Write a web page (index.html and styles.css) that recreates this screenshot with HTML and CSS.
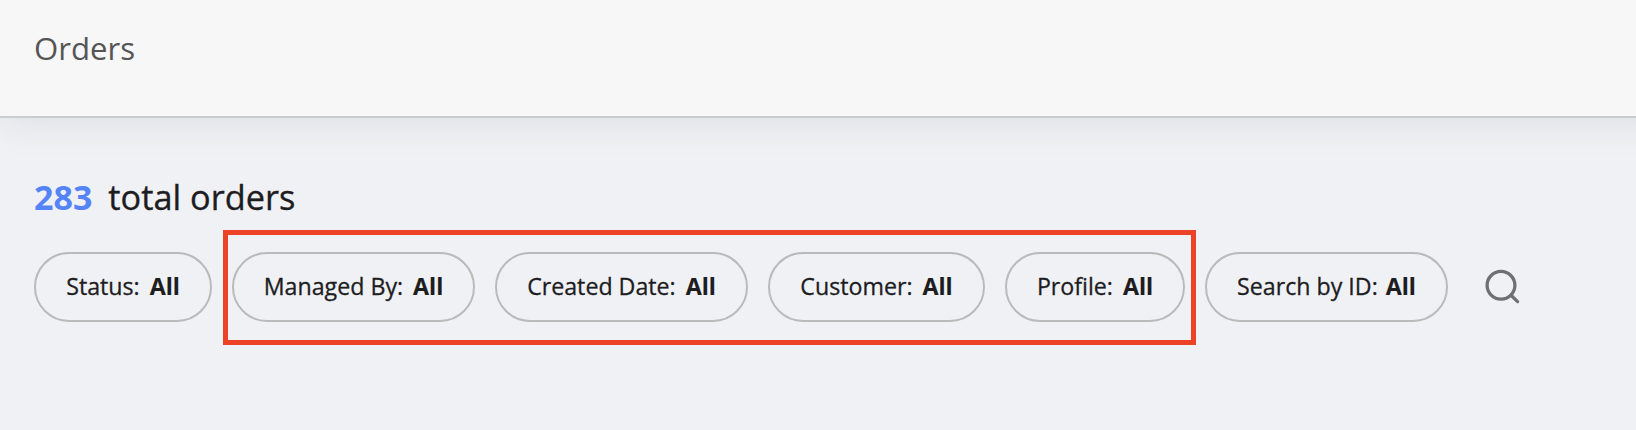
FILE: index.html
```html
<!DOCTYPE html>
<html lang="en">
<head>
<meta charset="utf-8">
<title>Orders</title>
<link rel="stylesheet" href="styles.css">
</head>
<body>
<header class="topbar"><h1 class="title">Orders</h1></header>
<main class="content">
<p class="summary"><strong class="count">283</strong><span class="label">total orders</span></p>
<div class="filters">
<button class="pill status"><span>Status:</span><b>All</b></button>
<div class="group">
<button class="pill managed"><span>Managed By:</span><b>All</b></button>
<button class="pill created"><span>Created Date:</span><b>All</b></button>
<button class="pill customer"><span>Customer:</span><b>All</b></button>
<button class="pill profile"><span>Profile:</span><b>All</b></button>
</div>
<button class="pill search-id"><span>Search by ID:</span><b>All</b></button>
<button class="search" aria-label="Search"><svg width="36" height="36" viewBox="0 0 36 36" fill="none" stroke="#6f7072" stroke-width="3.3" stroke-linecap="round"><circle cx="17" cy="16.3" r="13.9"/><path d="M27 26.3L33.6 32.6"/></svg></button>
</div>
</main>
</body>
</html>
```
FILE: styles.css
```css
* { box-sizing: border-box; }
body { margin: 0; height: 430px; overflow: hidden; background: #f0f1f5; color: #1d1d1f; font-family: "Open Sans", sans-serif; }
.topbar { height: 118px; margin-right: -40px; padding: 26px 34px; background: #f7f7f7; border-bottom: 2px solid #cbcccd; box-shadow: 0 4px 40px rgba(40, 45, 60, .09); }
.title { margin: 0; font-size: 31.2px; line-height: 44px; font-weight: 400; color: #555; }
.content { padding: 55px 34px 0; }
.summary { display: flex; gap: 16px; margin: 0; font-size: 34px; line-height: 48px; }
.count { color: #5484f8; font-weight: 700; }
.label { font-size: 34.3px; -webkit-text-stroke: .35px; }
.filters { display: flex; margin-top: 9px; }
.group { display: flex; gap: 20px; height: 115px; padding: 17px 6px 0 4px; margin-left: 11px; border: 5px solid #ec4226; }
.pill { display: flex; flex: none; align-items: center; justify-content: center; gap: 10px; height: 70px; padding: 0 0 2px; border: 2px solid #b9bab9; border-radius: 35px; background: transparent; color: #1d1d1f; font: 400 23.2px "Open Sans", sans-serif; white-space: nowrap; }
.pill span { -webkit-text-stroke: .3px; }
.pill b { font-weight: 700; -webkit-text-stroke: .15px; }
.status, .search-id, .search { margin-top: 22px; }
.status { width: 178px; }
.managed { width: 243px; }
.created { width: 253px; }
.customer { width: 217px; }
.profile { width: 180px; }
.search-id { width: 243px; margin-left: 9px; gap: 8px; }
.search { display: flex; align-items: center; height: 70px; padding: 0; margin-left: 36px; border: 0; background: none; }
```
